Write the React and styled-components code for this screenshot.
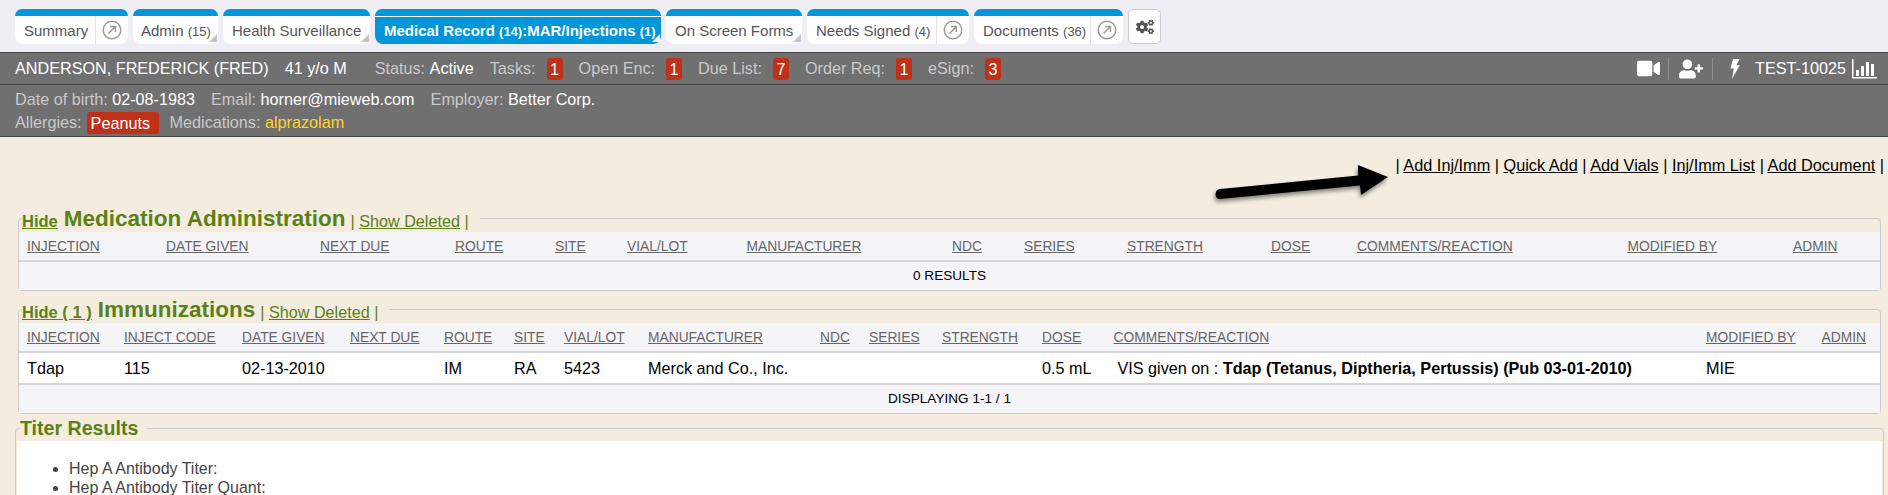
import React from "react";
import styled, { createGlobalStyle } from "styled-components";
import { FaVideo, FaUserPlus, FaCogs } from "react-icons/fa";

const Global = createGlobalStyle`
  html, body { margin: 0; padding: 0; height: 495px; overflow: hidden; background: #eeeef4; }
  body { font-family: "Liberation Sans", Arial, sans-serif; font-size: 16.2px; color: #000; }
`;

const Page = styled.div`
  height: 495px;
  overflow: hidden;
  display: flex;
  flex-direction: column;
`;

const TabBar = styled.nav`
  height: 52px;
  box-sizing: border-box;
  padding: 9px 0 0 15px;
  display: flex;
  gap: 5px;
  align-items: flex-start;
`;

const Tab = styled.div`
  position: relative;
  box-sizing: border-box;
  width: ${(p) => p.$width}px;
  height: 35px;
  display: flex;
  align-items: stretch;
  border-top: 7px solid #0096d9;
  border-radius: 7px 7px 8px 8px;
  background: ${(p) => (p.$active ? "#0096d9" : "#fff")};
  color: ${(p) => (p.$active ? "#fff" : "#555")};
  font-weight: ${(p) => (p.$active ? "bold" : "normal")};
  font-size: 15px;
  ${(p) => p.$active && "box-shadow: inset 0 1px 0 #fff;"}
`;

const TabLabel = styled.div`
  flex: 1;
  min-width: 0;
  padding-left: ${(p) => p.$pad || 9}px;
  line-height: 29px;
  white-space: nowrap;
`;

const TabCount = styled.span`
  font-size: 13px;
`;

const TabLink = styled.div`
  width: 33px;
  border-left: 1px solid #e4e4e4;
  display: flex;
  align-items: center;
  justify-content: center;
  box-sizing: border-box;
`;

const Corner = styled.span`
  position: absolute;
  right: 1px;
  bottom: 2px;
  width: 0;
  height: 0;
  border-style: solid;
  border-width: 0 0 8px 8px;
  border-color: transparent transparent ${(p) => (p.$active ? "#fff" : "#c4c4c4")} transparent;
`;

const GearButton = styled.button`
  width: 33px;
  height: 35px;
  box-sizing: border-box;
  padding: 0;
  background: #fff;
  border: 1px solid #ccc;
  border-radius: 5px;
  color: #555;
  display: flex;
  align-items: center;
  justify-content: center;
  font-size: 18px;
`;

const PatientBar = styled.header`
  background: #707070;
  border-top: 1px solid #444;
  border-bottom: 1px solid #444;
  color: #fff;
`;

const SummaryRow = styled.div`
  height: 31px;
  padding: 0 5px 0 15px;
  display: flex;
  align-items: center;
  border-bottom: 1px solid #474747;
`;

const Name = styled.span`
  margin-right: 16px;
`;

const Age = styled.span`
  margin-right: 28px;
`;

const Label = styled.span`
  color: #c9c9c9;
`;

const Stat = styled.span`
  display: inline-flex;
  align-items: center;
  margin-right: 16px;
`;

const Count = styled.span`
  display: inline-block;
  width: 16px;
  height: 22px;
  line-height: 22px;
  margin-left: 11px;
  text-align: center;
  background: #c0311a;
  border-radius: 3px;
  color: #fff;
`;

const Spacer = styled.div`
  flex: 1;
`;

const BarIcon = styled.span`
  display: inline-flex;
  align-items: center;
  justify-content: center;
  width: ${(p) => p.$w}px;
  height: 22px;
  font-size: ${(p) => p.$size || 18}px;
  color: #fff;
  ${(p) => p.$sep && "border-right: 1px solid #8f8f8f;"}
  box-sizing: border-box;
`;

const DetailRows = styled.div`
  height: 51px;
  padding: 3px 0 0 15px;
  box-sizing: border-box;
  display: flex;
  flex-direction: column;
`;

const DetailLine = styled.div`
  height: 23px;
  display: flex;
  align-items: center;
  white-space: pre;
`;

const Detail = styled.span`
  margin-right: 16px;
`;

const AllergyTag = styled.span`
  display: inline-block;
  width: 72px;
  height: 22px;
  line-height: 22px;
  box-sizing: border-box;
  padding-left: 4px;
  margin: 0 11px 0 5px;
  background: #c0311a;
  border-radius: 3px;
  color: #fff;
`;

const Med = styled.span`
  color: #ffd42a;
`;

const Main = styled.main`
  position: relative;
  flex: 1;
  min-height: 0;
  background: #f4eddf;
  padding: 0 4px 0 15px;
`;

const ActionRow = styled.div`
  height: 67px;
  box-sizing: border-box;
  padding-top: 19px;
  font-size: 16.3px;
  line-height: 18px;
  text-align: right;
  white-space: pre;
`;

const ActionLink = styled.a`
  color: #000;
  text-decoration: underline;
`;

const Arrow = styled.svg`
  position: absolute;
  left: 1205px;
  top: 20px;
  overflow: visible;
`;

const Inner = styled.div`
  padding: 0 3px;
`;

const Group = styled.fieldset`
  margin: ${(p) => p.$top || 0}px 0 0;
  padding: 0;
  min-width: 0;
  border: 1px solid #ccc;
  border-radius: 4px;
`;

const Legend = styled.legend`
  margin-left: 3px;
  padding: 0 11px 0 0;
  height: 28px;
  line-height: 30px;
  color: #5b8016;
  white-space: pre;
`;

const HideLink = styled.a`
  color: #5b8016;
  font-size: 16.5px;
  font-weight: bold;
  text-decoration: underline;
`;

const GroupTitle = styled.span`
  vertical-align: 1px;
  font-size: 22.5px;
  font-weight: bold;
  margin: 0 5px 0 6px;
`;

const ShowLink = styled.a`
  color: #5b8016;
  text-decoration: underline;
`;

const Grid = styled.div`
  display: grid;
  grid-template-columns: ${(p) => p.$cols};
  padding-left: 8px;
  align-items: center;
`;

const HeadRow = styled(Grid)`
  height: 28px;
  background: #f5f5f8;
  border-bottom: 2px solid #d5d5da;
`;

const HeadCell = styled.a`
  font-size: 13.8px;
  color: #666;
  text-decoration: underline;
  white-space: nowrap;
  justify-self: start;
`;

const BodyRow = styled(Grid)`
  height: 30px;
  background: #fff;
  border-bottom: 2px solid #d5d5da;
`;

const BodyCell = styled.div`
  font-size: 16.2px;
  white-space: nowrap;
  ${(p) => p.$indent && "padding-left: 4px;"}
`;

const Footer = styled.div`
  height: 28px;
  line-height: 28px;
  text-align: center;
  font-size: 13.6px;
  background: #f5f5f8;
`;

const TiterGroup = styled.fieldset`
  margin: 1px 0 0;
  padding: 0;
  min-width: 0;
  border: 1px solid #ccc;
  border-radius: 4px;
`;

const TiterLegend = styled.legend`
  margin-left: 4px;
  padding: 0 9px 0 0;
  height: 26px;
  line-height: 26px;
  color: #5b8016;
  font-size: 19.6px;
  font-weight: bold;
`;

const TiterBody = styled.div`
  background: #fff;
  margin: 0 1px;
  padding: 18px 0 0 0;
  min-height: 60px;
`;

const TiterList = styled.ul`
  margin: 0;
  padding: 0 0 0 52px;
  color: #444;
  font-size: 16px;
  line-height: 19px;
`;

const Bold = styled.b``;

const OutArrow = () => (
  <svg width="20" height="20" viewBox="0 0 20 20" fill="none" stroke="#999">
    <circle cx="10" cy="10" r="8.8" strokeWidth="1.4" />
    <path d="M6.5 13.5 L13 7 M8 6.6 H13.4 V12" strokeWidth="1.5" />
  </svg>
);

const Bolt = () => (
  <svg width="11" height="20" viewBox="0 0 11 20" fill="#fff">
    <path d="M4 0 H10.5 L7.4 6.2 H10.8 L3 20 L4.8 9.4 H1.4 Z" />
  </svg>
);

const ChartIcon = () => (
  <svg width="25" height="20" viewBox="0 0 25 20" fill="#fff">
    <path d="M0 0 H1.5 V18 H25 V19.5 H0 Z" />
    <rect x="4" y="11" width="3" height="6" />
    <rect x="9" y="7" width="3" height="10" />
    <rect x="14" y="3" width="3" height="14" />
    <rect x="19" y="5" width="3" height="12" />
  </svg>
);

const medCols = "139px 154px 135px 100px 72px 119.5px 205.5px 72px 103px 144px 86px 270.5px 165.5px 60px";
const immCols = "97px 118px 108px 94px 70px 50px 84px 172px 49px 73px 100px 71.5px 592.5px 115.5px 60px";

const medHead = ["INJECTION", "DATE GIVEN", "NEXT DUE", "ROUTE", "SITE", "VIAL/LOT", "MANUFACTURER", "NDC", "SERIES", "STRENGTH", "DOSE", "COMMENTS/REACTION", "MODIFIED BY", "ADMIN"];
const immHead = ["INJECTION", "INJECT CODE", "DATE GIVEN", "NEXT DUE", "ROUTE", "SITE", "VIAL/LOT", "MANUFACTURER", "NDC", "SERIES", "STRENGTH", "DOSE", "COMMENTS/REACTION", "MODIFIED BY", "ADMIN"];

export default function App() {
  return (
    <Page>
      <Global />
      <TabBar>
        <Tab $width={113}><TabLabel>Summary</TabLabel><TabLink><OutArrow /></TabLink></Tab>
        <Tab $width={85}><TabLabel $pad={8}>Admin <TabCount>(15)</TabCount></TabLabel><Corner /></Tab>
        <Tab $width={147}><TabLabel>Health Surveillance</TabLabel><Corner /></Tab>
        <Tab $width={286} $active><TabLabel>Medical Record <TabCount>(14)</TabCount>:MAR/Injections <TabCount>(1)</TabCount></TabLabel><Corner $active /></Tab>
        <Tab $width={136}><TabLabel>On Screen Forms</TabLabel><Corner /></Tab>
        <Tab $width={162}><TabLabel>Needs Signed <TabCount>(4)</TabCount></TabLabel><TabLink><OutArrow /></TabLink></Tab>
        <Tab $width={149}><TabLabel>Documents <TabCount>(36)</TabCount></TabLabel><TabLink><OutArrow /></TabLink></Tab>
        <GearButton aria-label="Settings"><FaCogs /></GearButton>
      </TabBar>

      <PatientBar>
        <SummaryRow>
          <Name>ANDERSON, FREDERICK (FRED)</Name>
          <Age>41 y/o M</Age>
          <Stat><Label>Status:&nbsp;</Label>Active</Stat>
          <Stat><Label>Tasks:</Label><Count>1</Count></Stat>
          <Stat><Label>Open Enc:</Label><Count>1</Count></Stat>
          <Stat><Label>Due List:</Label><Count>7</Count></Stat>
          <Stat><Label>Order Req:</Label><Count>1</Count></Stat>
          <Stat><Label>eSign:</Label><Count>3</Count></Stat>
          <Spacer />
          <BarIcon $w={40} $sep $size={23}><FaVideo /></BarIcon>
          <BarIcon $w={44} $sep $size={24}><FaUserPlus /></BarIcon>
          <BarIcon $w={42}><Bolt /></BarIcon>
          <span>TEST-10025</span>
          <BarIcon $w={37}><ChartIcon /></BarIcon>
        </SummaryRow>
        <DetailRows>
          <DetailLine>
            <Detail><Label>Date of birth: </Label>02-08-1983</Detail>
            <Detail><Label>Email: </Label>horner@mieweb.com</Detail>
            <Detail><Label>Employer: </Label>Better Corp.</Detail>
          </DetailLine>
          <DetailLine>
            <Label>Allergies:</Label><AllergyTag>Peanuts</AllergyTag>
            <Detail><Label>Medications: </Label><Med>alprazolam</Med></Detail>
          </DetailLine>
        </DetailRows>
      </PatientBar>

      <Main>
        <ActionRow>
          {"| "}<ActionLink>Add Inj/Imm</ActionLink>{" | "}<ActionLink>Quick Add</ActionLink>{" | "}<ActionLink>Add Vials</ActionLink>{" | "}<ActionLink>Inj/Imm List</ActionLink>{" | "}<ActionLink>Add Document</ActionLink>{" |"}
        </ActionRow>
        <Arrow width="190" height="46" viewBox="0 0 190 46">
          <defs>
            <filter id="arrowShadow" x="-10%" y="-30%" width="120%" height="170%">
              <feDropShadow dx="-1" dy="3" stdDeviation="2" floodColor="#000" floodOpacity="0.45" />
            </filter>
          </defs>
          <path
            filter="url(#arrowShadow)"
            fill="#000"
            d="M15 42 C9 42 9 32.5 15 32 L153 18.5 L153 8 L183 20 L156 38 L155 28.5 Z"
          />
        </Arrow>
        <Inner>
          <Group>
            <Legend>
              <HideLink>Hide</HideLink>
              <GroupTitle>Medication Administration</GroupTitle>
              {"| "}<ShowLink>Show Deleted</ShowLink>{" |"}
            </Legend>
            <HeadRow $cols={medCols}>
              {medHead.map((h) => <HeadCell key={h}>{h}</HeadCell>)}
            </HeadRow>
            <Footer>0 RESULTS</Footer>
          </Group>
          <Group $top={4}>
            <Legend>
              <HideLink>Hide ( 1 )</HideLink>
              <GroupTitle>Immunizations</GroupTitle>
              {"| "}<ShowLink>Show Deleted</ShowLink>{" |"}
            </Legend>
            <HeadRow $cols={immCols}>
              {immHead.map((h) => <HeadCell key={h}>{h}</HeadCell>)}
            </HeadRow>
            <BodyRow $cols={immCols}>
              <BodyCell>Tdap</BodyCell>
              <BodyCell>115</BodyCell>
              <BodyCell>02-13-2010</BodyCell>
              <BodyCell />
              <BodyCell>IM</BodyCell>
              <BodyCell>RA</BodyCell>
              <BodyCell>5423</BodyCell>
              <BodyCell>Merck and Co., Inc.</BodyCell>
              <BodyCell />
              <BodyCell />
              <BodyCell />
              <BodyCell>0.5 mL</BodyCell>
              <BodyCell $indent>VIS given on : <Bold>Tdap (Tetanus, Diptheria, Pertussis) (Pub 03-01-2010)</Bold></BodyCell>
              <BodyCell>MIE</BodyCell>
              <BodyCell />
            </BodyRow>
            <Footer>DISPLAYING 1-1 / 1</Footer>
          </Group>
        </Inner>
        <TiterGroup>
          <TiterLegend>Titer Results</TiterLegend>
          <TiterBody>
            <TiterList>
              <li>Hep A Antibody Titer:</li>
              <li>Hep A Antibody Titer Quant:</li>
            </TiterList>
          </TiterBody>
        </TiterGroup>
      </Main>
    </Page>
  );
}
